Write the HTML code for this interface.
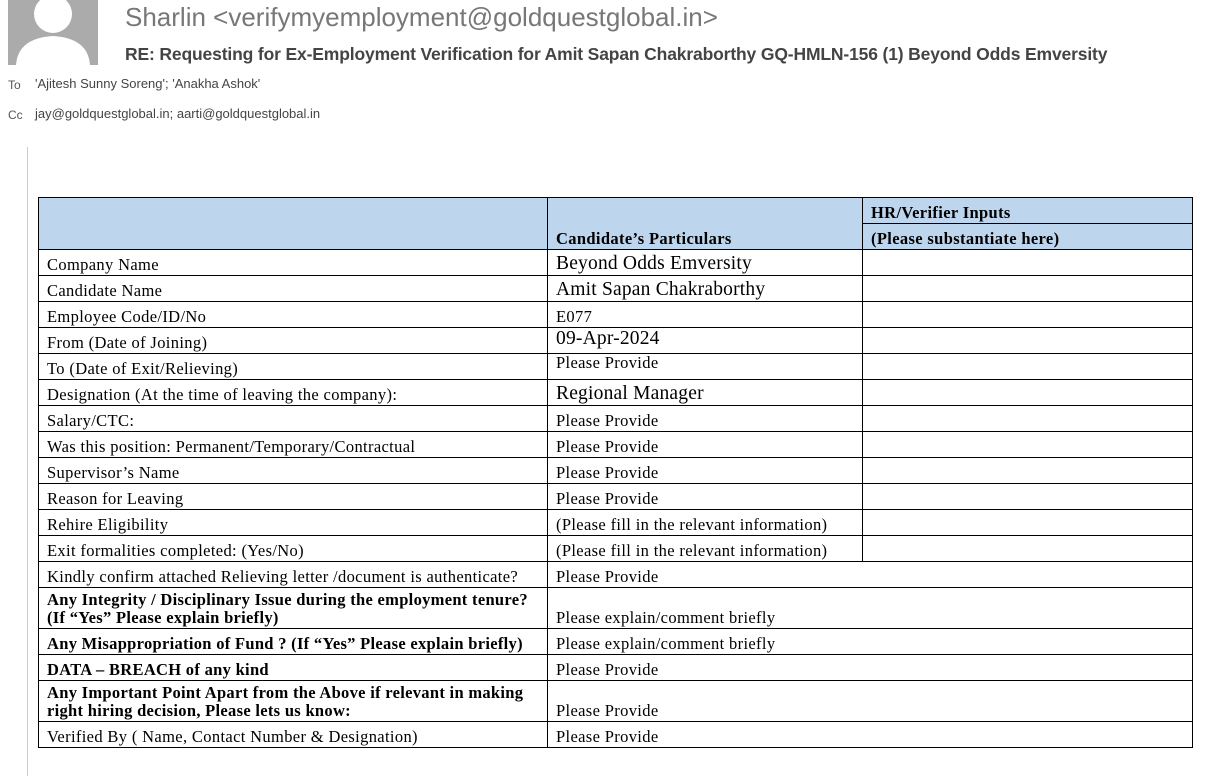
<!DOCTYPE html>
<html><head><meta charset="utf-8"><style>
body{margin:0;width:1211px;height:776px;background:#fff;position:relative;overflow:hidden;font-family:"Liberation Sans",sans-serif}
.av{position:absolute;left:8px;top:0;width:90px;height:65px;background:#ababab;overflow:hidden}
.name{position:absolute;left:125px;top:2px;font-size:26px;color:#777;white-space:nowrap}
.subj{position:absolute;left:125px;top:44px;font-size:17.5px;color:#444;font-weight:bold;white-space:nowrap;letter-spacing:-0.15px}
.lab{position:absolute;left:8px;font-size:12px;color:#555}
.val{position:absolute;left:35px;font-size:13px;color:#444;white-space:nowrap}
.vl{position:absolute;left:27px;top:147px;width:1px;height:629px;background:#ccc}
table{position:absolute;left:38px;top:197px;border-collapse:collapse;font-family:"Liberation Serif",serif;font-size:16.5px;letter-spacing:0.35px;color:#000}
td{border:1px solid #000;padding:0 0 1px 8px;vertical-align:bottom;line-height:18px;white-space:nowrap}
.h{background:#bdd6ee;font-weight:bold}
.b{font-weight:bold;letter-spacing:0.3px}
.big{font-size:19.5px;line-height:21px;letter-spacing:0.2px}
</style></head><body>
<div class="av"><svg width="90" height="65"><circle cx="45" cy="14" r="19" fill="#fff"/><path d="M8 65 Q10 38 45 36 Q80 38 82 65Z" fill="#fff"/></svg></div>
<div class="name">Sharlin &lt;verifymyemployment@goldquestglobal.in&gt;</div>
<div class="subj">RE: Requesting for Ex-Employment Verification for Amit Sapan Chakraborthy GQ-HMLN-156 (1) Beyond Odds Emversity</div>
<div class="lab" style="top:78px">To</div><div class="val" style="top:76px">'Ajitesh Sunny Soreng'; 'Anakha Ashok'</div>
<div class="lab" style="top:108px">Cc</div><div class="val" style="top:106px">jay@goldquestglobal.in; aarti@goldquestglobal.in</div>
<div class="vl"></div>
<table>
<colgroup><col style="width:509px"><col style="width:315px"><col style="width:330px"></colgroup>
<tr style="height:26px"><td class="h" rowspan="2"></td><td class="h" rowspan="2">Candidate’s Particulars</td><td class="h">HR/Verifier Inputs</td></tr>
<tr style="height:26px"><td class="h">(Please substantiate here)</td></tr>
<tr style="height:26px"><td>Company Name</td><td class="big">Beyond Odds Emversity</td><td></td></tr>
<tr style="height:26px"><td>Candidate Name</td><td class="big">Amit Sapan Chakraborthy</td><td></td></tr>
<tr style="height:26px"><td>Employee Code/ID/No</td><td>E077</td><td></td></tr>
<tr style="height:26px"><td>From (Date of Joining)</td><td class="big" style="vertical-align:top">09-Apr-2024</td><td></td></tr>
<tr style="height:26px"><td>To (Date of Exit/Relieving)</td><td style="vertical-align:top">Please Provide</td><td></td></tr>
<tr style="height:26px"><td>Designation (At the time of leaving the company):</td><td class="big">Regional Manager</td><td></td></tr>
<tr style="height:26px"><td>Salary/CTC:</td><td>Please Provide</td><td></td></tr>
<tr style="height:26px"><td>Was this position: Permanent/Temporary/Contractual</td><td>Please Provide</td><td></td></tr>
<tr style="height:26px"><td>Supervisor’s Name</td><td>Please Provide</td><td></td></tr>
<tr style="height:26px"><td>Reason for Leaving</td><td>Please Provide</td><td></td></tr>
<tr style="height:26px"><td>Rehire Eligibility</td><td>(Please fill in the relevant information)</td><td></td></tr>
<tr style="height:26px"><td>Exit formalities completed: (Yes/No)</td><td>(Please fill in the relevant information)</td><td></td></tr>
<tr style="height:26px"><td>Kindly confirm attached Relieving letter /document is authenticate?</td><td colspan="2">Please Provide</td></tr>
<tr style="height:41px"><td class="b">Any Integrity / Disciplinary Issue during the employment tenure?<br>(If “Yes” Please explain briefly)</td><td colspan="2">Please explain/comment briefly</td></tr>
<tr style="height:26px"><td class="b">Any Misappropriation of Fund ? (If “Yes” Please explain briefly)</td><td colspan="2">Please explain/comment briefly</td></tr>
<tr style="height:26px"><td class="b">DATA – BREACH of any kind</td><td colspan="2">Please Provide</td></tr>
<tr style="height:41px"><td class="b">Any Important Point Apart from the Above if relevant in making<br>right hiring decision, Please lets us know:</td><td colspan="2">Please Provide</td></tr>
<tr style="height:26px"><td>Verified By ( Name, Contact Number &amp; Designation)</td><td colspan="2">Please Provide</td></tr>
</table>
</body></html>
